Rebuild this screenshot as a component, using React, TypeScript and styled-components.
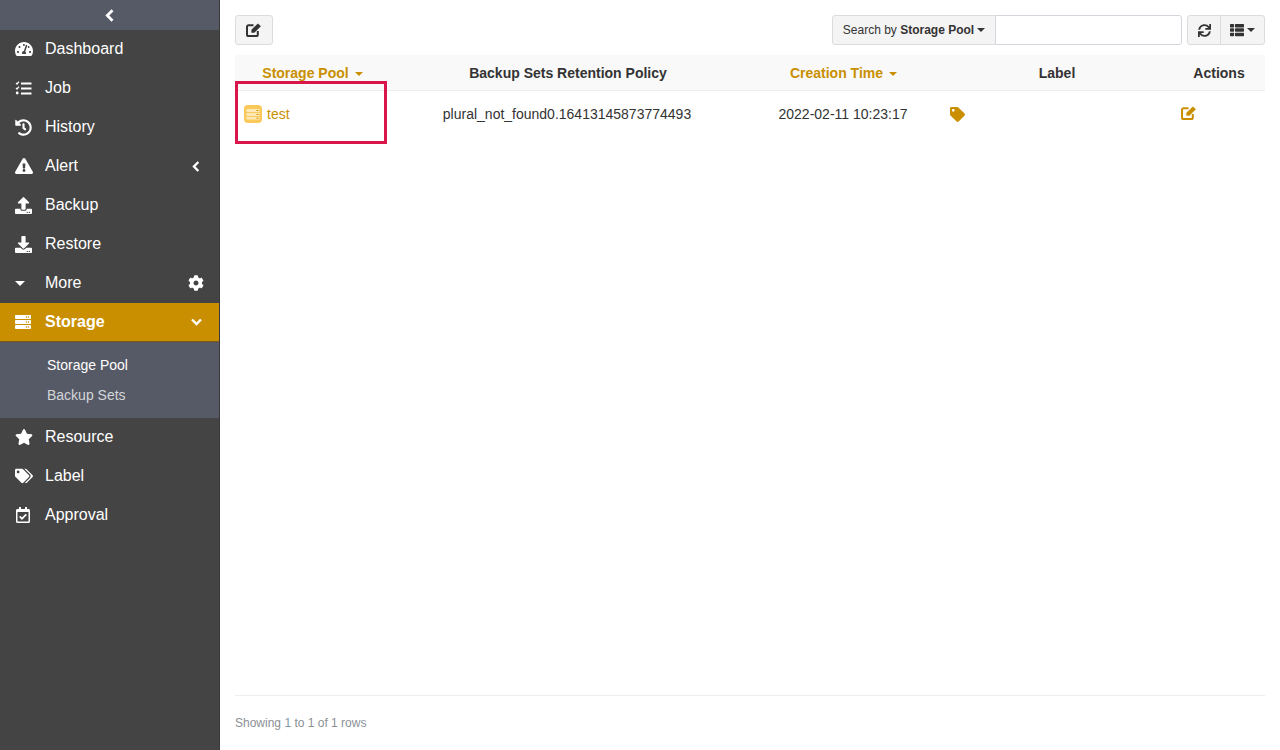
import styled, { createGlobalStyle } from "styled-components";
import type { ComponentType } from "react";
import {
	FaCog,
	FaDownload,
	FaExclamationTriangle,
	FaHistory,
	FaRegCalendarCheck,
	FaServer,
	FaStar,
	FaSync,
	FaTachometerAlt,
	FaTag,
	FaTags,
	FaThList,
	FaUpload,
} from "react-icons/fa";

const GOLD = "#c98f00";

const GlobalStyle = createGlobalStyle`
	html, body {
		margin: 0;
		padding: 0;
		height: 100%;
		background: #fff;
		font-family: "Liberation Sans", Arial, sans-serif;
		color: #333;
	}
	* {
		box-sizing: border-box;
	}
`;

const Page = styled.div`
	display: flex;
	width: 1280px;
	height: 750px;
	overflow: hidden;
	position: relative;
`;

const Sidebar = styled.nav`
	width: 220px;
	flex-shrink: 0;
	background: #444444;
	border-right: 1px solid #3a3a3a;
	color: #fff;
`;

const Collapse = styled.div`
	height: 30px;
	background: #565a66;
	display: flex;
	align-items: center;
	justify-content: center;
`;

const MenuList = styled.ul`
	list-style: none;
	margin: 0;
	padding: 0;
`;

const MenuItem = styled.li<{ $active?: boolean }>`
	height: 39px;
	display: flex;
	align-items: center;
	padding: 0 15px 1px 15px;
	font-size: 16px;
	font-weight: ${(props) => (props.$active ? 700 : 400)};
	background: ${(props) => (props.$active ? GOLD : "transparent")};
	border-bottom: ${(props) => (props.$active ? "1px solid #7a5a10" : "none")};
`;

const MenuIcon = styled.span<{ $size?: number }>`
	width: 30px;
	flex-shrink: 0;
	display: flex;
	align-items: center;
	font-size: ${(props) => props.$size ?? 18}px;
`;

const MenuLabel = styled.span`
	flex: 1;
`;

const MenuExtra = styled.span`
	width: 16px;
	display: flex;
	align-items: center;
	justify-content: center;
	font-size: 16px;
`;

const SubMenu = styled.ul`
	list-style: none;
	margin: 0;
	padding: 8px 0 8px 47px;
	background: #565a66;
`;

const SubItem = styled.li<{ $current?: boolean }>`
	height: 30px;
	display: flex;
	align-items: center;
	font-size: 14px;
	color: ${(props) => (props.$current ? "#fff" : "#d4d6da")};
`;

const Main = styled.main`
	flex: 1;
	min-width: 0;
	padding: 15px 15px 0;
	display: flex;
	flex-direction: column;
`;

const Toolbar = styled.div`
	display: flex;
	justify-content: space-between;
	height: 30px;
	margin-bottom: 10px;
`;

const ToolGroup = styled.div`
	display: flex;
	gap: 5px;
`;

const InputGroup = styled.div`
	display: flex;
`;

const ToolButton = styled.button<{ $side?: "left" | "right"; $width?: number }>`
	height: 30px;
	width: ${(props) => (props.$width ? `${props.$width}px` : "auto")};
	padding: 0;
	display: flex;
	align-items: center;
	justify-content: center;
	white-space: nowrap;
	font-family: inherit;
	font-size: 12px;
	color: #333;
	background: #f4f4f4;
	border: 1px solid #dcdcdc;
	border-radius: ${(props) =>
		props.$side === "left" ? "3px 0 0 3px" : props.$side === "right" ? "0 3px 3px 0" : "3px"};
	${(props) => (props.$side === "right" ? "margin-left: -1px;" : "")}
`;

const SearchInput = styled.input`
	width: 187px;
	height: 30px;
	margin-left: -1px;
	border: 1px solid #d5d5dd;
	border-radius: 0 3px 3px 0;
	background: #fff;
`;

const Table = styled.table`
	width: 1030px;
	table-layout: fixed;
	border-collapse: collapse;
	font-size: 14px;
`;

const HeadRow = styled.tr`
	height: 35px;
	background: #f9f9f9;
	border-bottom: 1px solid #eeeeee;
`;

const HeadCell = styled.th<{ $sorted?: boolean; $nudge?: number }>`
	padding: 1px 0 0 ${(props) => props.$nudge ?? 0}px;
	text-align: center;
	font-weight: 700;
	color: ${(props) => (props.$sorted ? GOLD : "#333")};
`;

const Caret = styled.span<{ $half?: number; $gap?: number }>`
	display: inline-block;
	vertical-align: middle;
	width: 0;
	height: 0;
	margin-left: ${(props) => props.$gap ?? 3}px;
	border-top: ${(props) => props.$half ?? 4}px solid currentColor;
	border-left: ${(props) => props.$half ?? 4}px solid transparent;
	border-right: ${(props) => props.$half ?? 4}px solid transparent;
`;

const BodyRow = styled.tr`
	height: 47px;
`;

const Cell = styled.td<{ $align?: "left" | "center" }>`
	padding: 0 8px;
	text-align: ${(props) => props.$align ?? "center"};
	color: #333;
`;

const PoolName = styled.span`
	display: flex;
	align-items: center;
	gap: 5px;
	margin-left: 1px;
	color: ${GOLD};
`;

const GoldIcon = styled.span<{ $size: number; $left: number; $lift?: number }>`
	display: inline-flex;
	vertical-align: middle;
	margin-left: ${(props) => props.$left}px;
	margin-bottom: ${(props) => props.$lift ?? 0}px;
	color: ${GOLD};
	font-size: ${(props) => props.$size}px;
`;

const Highlight = styled.div`
	position: absolute;
	left: 235px;
	top: 81px;
	width: 152px;
	height: 63px;
	border: 3px solid #d9164b;
	pointer-events: none;
`;

const Footer = styled.div`
	margin-top: auto;
	height: 55px;
	border-top: 1px solid #eeeeee;
	padding-top: 20px;
	font-size: 12px;
	color: #8a8f96;
`;

const PageNumber = styled.span`
	color: #7f9aaa;
`;

const ChevronLeft = ({ height = 13 }: { height?: number }) => (
	<svg width={(height * 9) / 13} height={height} viewBox="0 0 9 13" fill="none" stroke="currentColor">
		<path d="M7.5 1.2 L2.3 6.5 L7.5 11.8" strokeWidth="2.8" />
	</svg>
);

const MenuChevronLeft = () => <ChevronLeft height={11} />;

const ChevronDown = () => (
	<svg width="11" height="8" viewBox="0 0 11 8" fill="none" stroke="currentColor">
		<path d="M1 1.5 L5.5 6 L10 1.5" strokeWidth="2.4" />
	</svg>
);

const EditIcon = ({ width = 16 }: { width?: number }) => (
	<svg width={width} height={(width * 14) / 16} viewBox="0 0 16 14" fill="none">
		<path
			d="M7.5 2.2H2.6A1.6 1.6 0 0 0 1 3.8v7.6A1.6 1.6 0 0 0 2.6 13h7.6a1.6 1.6 0 0 0 1.6-1.6V8"
			stroke="currentColor"
			strokeWidth="2"
		/>
		<path d="M5.4 6.8 11.9.4l3 2.9-6.5 6.5H5.4z" fill="currentColor" />
	</svg>
);

const ChecklistIcon = () => (
	<svg width="17" height="14" viewBox="0 0 17 14" fill="none" stroke="currentColor">
		<path d="M1 2l1 1 2-2.4M1 7l1 1 2-2.4" strokeWidth="1.2" />
		<circle cx="2.2" cy="12" r="1.4" fill="currentColor" stroke="none" />
		<path d="M6 2.5h10.5M6 7.5h10.5M6 12.5h10.5" strokeWidth="2" />
	</svg>
);

const PoolIcon = () => (
	<svg width="18" height="18" viewBox="0 0 18 18">
		<rect width="18" height="18" rx="4" fill="#fbc85a" />
		<rect x="2.5" y="4" width="13" height="3" fill="#fde9b8" />
		<rect x="2.5" y="8" width="13" height="3" fill="#fde9b8" />
		<rect x="2.5" y="12" width="13" height="2.5" fill="#fde9b8" />
		<path d="M12.5 5.5h2M12.5 9.5h2M12.5 13.2h2" stroke={GOLD} strokeWidth="1" />
	</svg>
);

const MoreCaret = () => <Caret $half={5} $gap={0} />;

interface IMenu {
	label: string;
	icon: ComponentType;
	iconSize?: number;
	extra?: ComponentType;
	active?: boolean;
}

const topMenu: IMenu[] = [
	{ label: "Dashboard", icon: FaTachometerAlt },
	{ label: "Job", icon: ChecklistIcon },
	{ label: "History", icon: FaHistory, iconSize: 17 },
	{ label: "Alert", icon: FaExclamationTriangle, extra: MenuChevronLeft },
	{ label: "Backup", icon: FaUpload, iconSize: 17 },
	{ label: "Restore", icon: FaDownload, iconSize: 17 },
	{ label: "More", icon: MoreCaret, extra: FaCog },
	{ label: "Storage", icon: FaServer, iconSize: 16, extra: ChevronDown, active: true },
];

const bottomMenu: IMenu[] = [
	{ label: "Resource", icon: FaStar },
	{ label: "Label", icon: FaTags },
	{ label: "Approval", icon: FaRegCalendarCheck, iconSize: 16 },
];

function Menu({ items }: { items: IMenu[] }) {
	return (
		<MenuList>
			{items.map((item) => (
				<MenuItem key={item.label} $active={item.active}>
					<MenuIcon $size={item.iconSize}>
						<item.icon />
					</MenuIcon>
					<MenuLabel>{item.label}</MenuLabel>
					{item.extra ? (
						<MenuExtra>
							<item.extra />
						</MenuExtra>
					) : null}
				</MenuItem>
			))}
		</MenuList>
	);
}

function App() {
	return (
		<Page>
			<GlobalStyle />
			<Sidebar>
				<Collapse>
					<ChevronLeft />
				</Collapse>
				<Menu items={topMenu} />
				<SubMenu>
					<SubItem $current>Storage Pool</SubItem>
					<SubItem>Backup Sets</SubItem>
				</SubMenu>
				<Menu items={bottomMenu} />
			</Sidebar>
			<Main>
				<Toolbar>
					<ToolButton $width={38}>
						<EditIcon />
					</ToolButton>
					<ToolGroup>
						<InputGroup>
							<ToolButton $side="left" $width={164}>
								<span>
									Search by <b>Storage Pool</b>
								</span>
								<Caret />
							</ToolButton>
							<SearchInput />
						</InputGroup>
						<InputGroup>
							<ToolButton $side="left" $width={34}>
								<FaSync size={13} />
							</ToolButton>
							<ToolButton $side="right" $width={45}>
								<FaThList size={14} />
								<Caret />
							</ToolButton>
						</InputGroup>
					</ToolGroup>
				</Toolbar>
				<Table>
					<colgroup>
						<col width="155" />
						<col width="354" />
						<col width="198" />
						<col width="230" />
						<col width="93" />
					</colgroup>
					<thead>
						<HeadRow>
							<HeadCell $sorted>
								Storage Pool
								<Caret $gap={6} />
							</HeadCell>
							<HeadCell $nudge={2}>Backup Sets Retention Policy</HeadCell>
							<HeadCell $sorted $nudge={1}>
								Creation Time
								<Caret $gap={6} />
							</HeadCell>
							<HeadCell>Label</HeadCell>
							<HeadCell $nudge={1}>Actions</HeadCell>
						</HeadRow>
					</thead>
					<tbody>
						<BodyRow>
							<Cell $align="left">
								<PoolName>
									<PoolIcon />
									test
								</PoolName>
							</Cell>
							<Cell>plural_not_found0.16413145873774493</Cell>
							<Cell>2022-02-11 10:23:17</Cell>
							<Cell $align="left">
								<GoldIcon $size={15} $left={0}>
									<FaTag />
								</GoldIcon>
							</Cell>
							<Cell $align="left">
								<GoldIcon $size={16} $left={1} $lift={2}>
									<EditIcon />
								</GoldIcon>
							</Cell>
						</BodyRow>
					</tbody>
				</Table>
				<Footer>
					Showing <PageNumber>1</PageNumber> to 1 of 1 rows
				</Footer>
			</Main>
			<Highlight />
		</Page>
	);
}

export default App;
